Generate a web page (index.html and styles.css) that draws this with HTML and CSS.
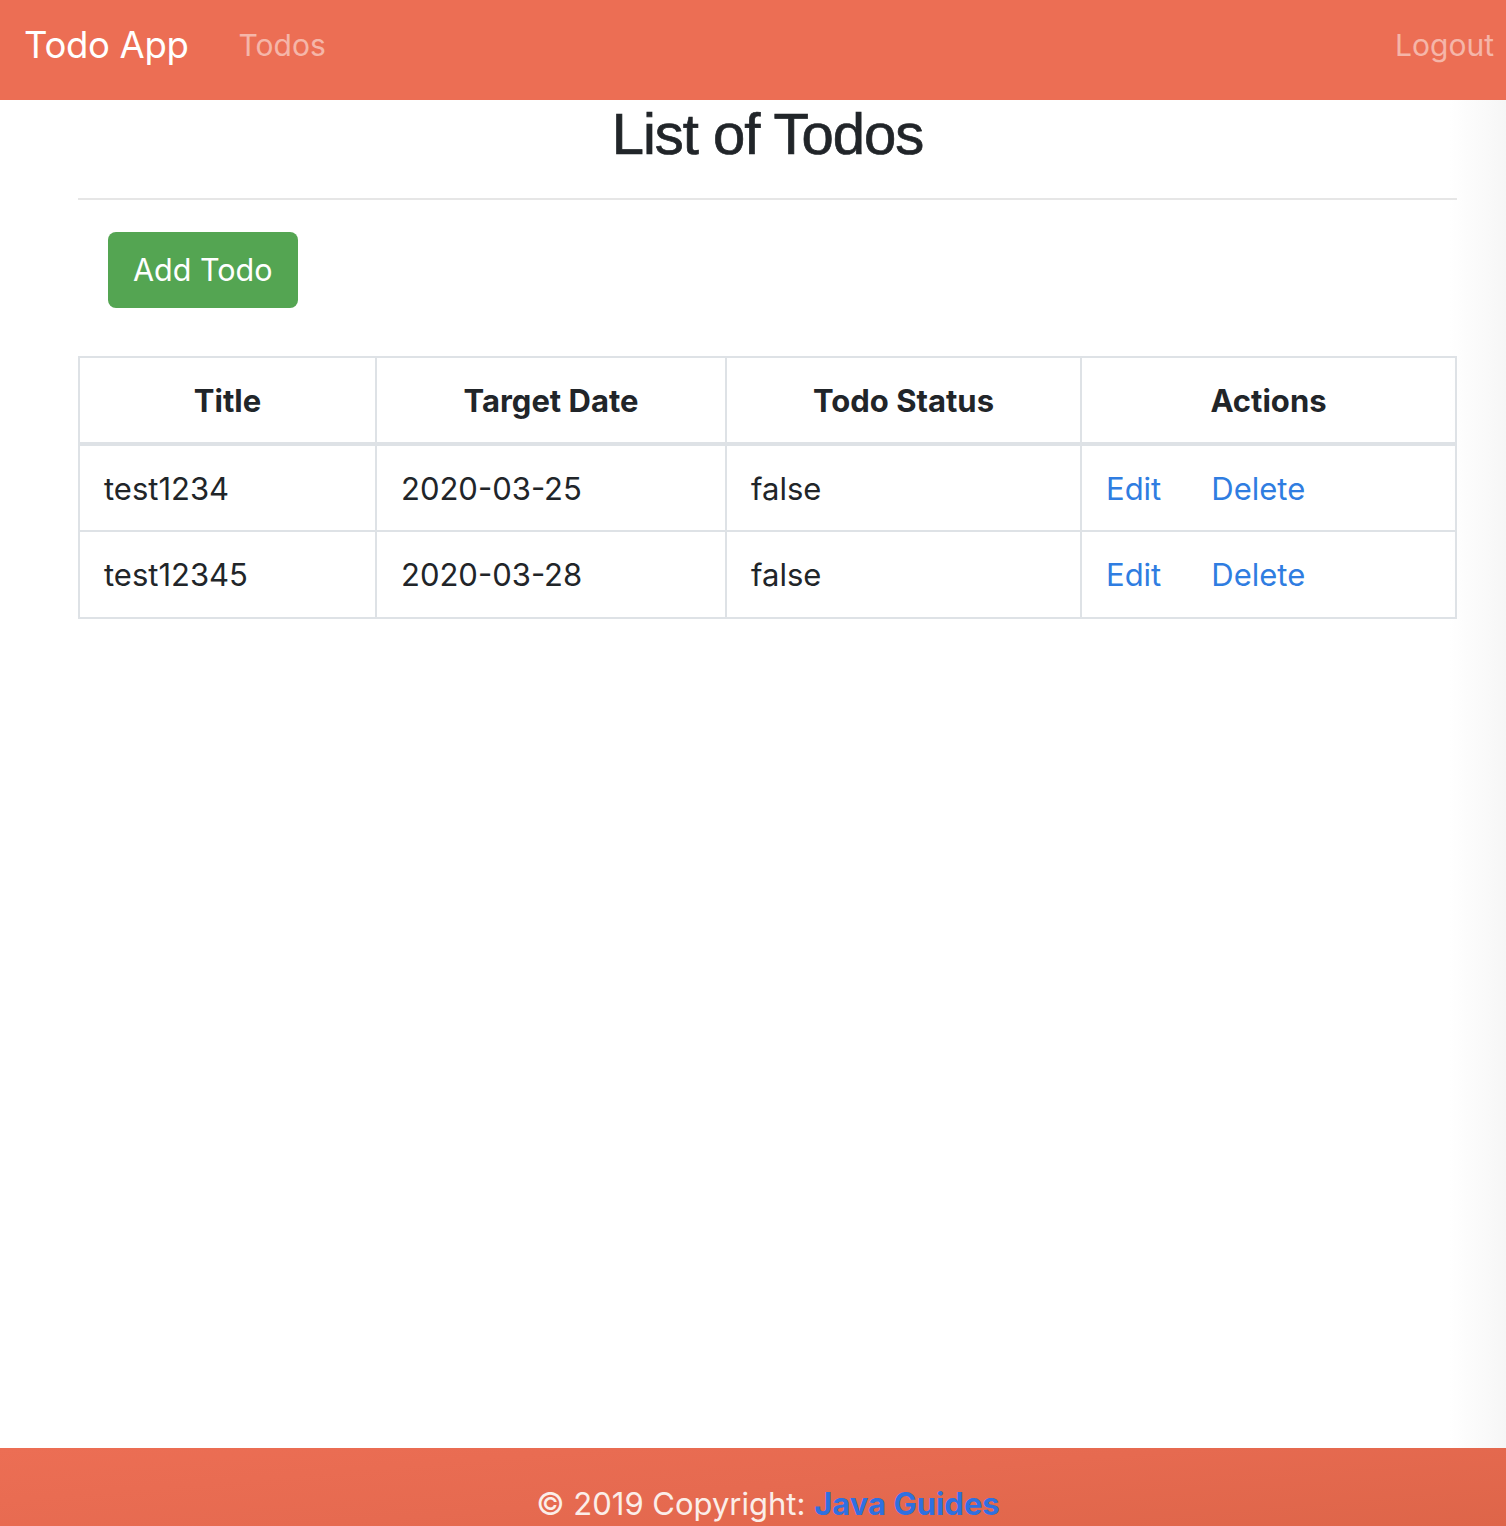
FILE: index.html
```html
<!DOCTYPE html>
<html lang="en">
<head>
<meta charset="utf-8">
<title>Todo App</title>
<link rel="stylesheet" href="styles.css">
</head>
<body>
<header class="navbar">
  <div class="nav-left">
    <a class="brand" href="#">Todo App</a>
    <a class="nav-link" href="#">Todos</a>
  </div>
  <a class="nav-link logout" href="#">Logout</a>
</header>
<main class="page">
  <div class="container">
    <h2 class="title">List of Todos</h2>
    <hr class="divider">
    <div class="toolbar">
      <a class="btn-success" href="#">Add Todo</a>
    </div>
    <table class="todo-table">
      <thead>
        <tr>
          <th class="c1">Title</th>
          <th class="c2">Target Date</th>
          <th class="c3">Todo Status</th>
          <th class="c4">Actions</th>
        </tr>
      </thead>
      <tbody>
        <tr>
          <td>test1234</td>
          <td>2020-03-25</td>
          <td>false</td>
          <td><a class="act edit" href="#">Edit</a><a class="act" href="#">Delete</a></td>
        </tr>
        <tr>
          <td>test12345</td>
          <td>2020-03-28</td>
          <td>false</td>
          <td><a class="act edit" href="#">Edit</a><a class="act" href="#">Delete</a></td>
        </tr>
      </tbody>
    </table>
  </div>
</main>
<footer class="footer">
  <span class="copy">© 2019 Copyright: <a class="footer-link" href="#">Java Guides</a></span>
</footer>
</body>
</html>
```
FILE: styles.css
```css
* { box-sizing: border-box; }
html, body { margin: 0; padding: 0; }
body {
  font-family: Inter, "Noto Sans", sans-serif;
  color: #212529;
  background: #fff;
  width: 1506px;
  height: 1526px;
  overflow: hidden;
  display: flex;
  flex-direction: column;
}
a { text-decoration: none; }

.navbar {
  height: 100px;
  background: #ec6e54;
  display: flex;
  align-items: center;
  justify-content: space-between;
  padding: 0 12px 10px 24px;
  flex-shrink: 0;
}
.nav-left { display: flex; align-items: center; }
.brand {
  color: #fff;
  font-size: 36.5px;
  margin-right: 50px;
  letter-spacing: -0.3px;
}
.nav-link {
  color: rgba(255,255,255,0.5);
  font-size: 30px;
}

.page {
  flex: 1;
  background: linear-gradient(to right, #fff 0, #fff 1450px, #f6f6f6 1506px);
}
.container {
  margin-left: 78px;
  width: 1379px;
}
.title {
  margin: 0;
  text-align: center;
  font-family: "Liberation Sans", Arial, sans-serif;
  font-weight: 500;
  font-size: 58px;
  line-height: 72px;
  padding-top: 0;
  margin-top: -2px;
  letter-spacing: -1px;
  -webkit-text-stroke: 0.7px #212529;
}
.divider {
  margin: 28px 0 0;
  border: 0;
  border-top: 2px solid #e6e6e6;
}
.toolbar { padding: 32px 30px 48px; }
.btn-success {
  display: inline-block;
  background: #54a552;
  color: #fff;
  font-size: 30.5px;
  line-height: 48px;
  padding: 14px 25px;
  border-radius: 8px;
}

.todo-table {
  width: 100%;
  border-collapse: collapse;
  font-size: 31px;
  border: 2px solid #dee2e6;
}
.todo-table th, .todo-table td {
  border: 2px solid #dee2e6;
  padding: 0 24px;
  height: 87px;
  text-align: left;
  vertical-align: middle;
}
.todo-table th {
  text-align: center;
  font-weight: 700;
  border-bottom: 4px solid #dee2e6;
}
.c1 { width: 297px; }
.c2 { width: 350px; }
.c3 { width: 355px; }
.act { color: #2f7de1; }
.edit { margin-right: 50px; }

.footer {
  height: 78px;
  flex-shrink: 0;
  background: linear-gradient(175deg, #ec6e54 0%, #e66a50 50%, #de6549 100%);
  display: flex;
  justify-content: center;
  padding-top: 36px;
}
.copy {
  color: #fbeee9;
  font-size: 31px;
  margin-left: 30px;
  line-height: 40px;
}
.footer-link { color: #2f70e0; font-weight: 700; }
```
